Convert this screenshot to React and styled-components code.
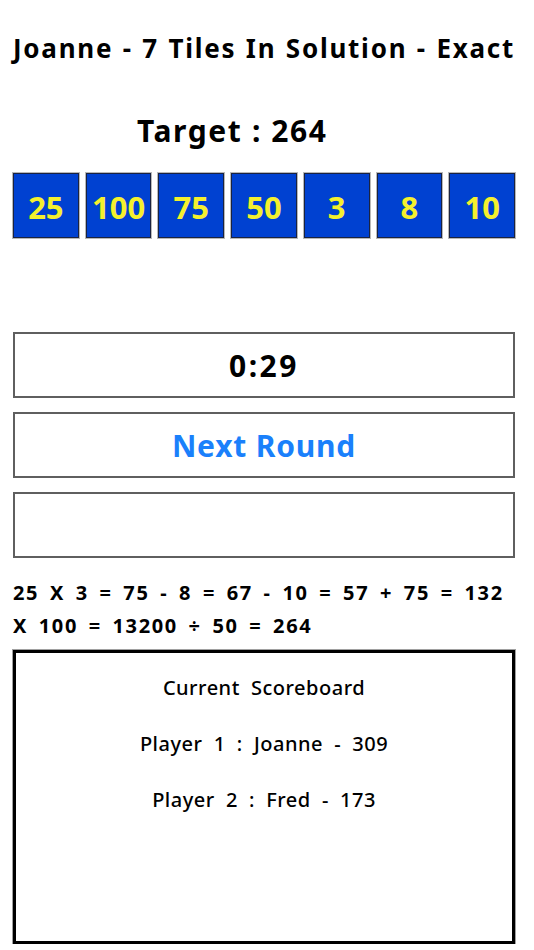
import React from 'react';
import styled, { createGlobalStyle } from 'styled-components';

const GlobalStyle = createGlobalStyle`
  html, body {
    margin: 0;
    padding: 0;
    background: #fff;
  }
  body {
    font-family: "Noto Sans", "DejaVu Sans", sans-serif;
    color: #000;
  }
`;

const tiles = [25, 100, 75, 50, 3, 8, 10];

const App = () => {
    return (
        <Page>
            <GlobalStyle />
            <Title>Joanne - 7 Tiles In Solution - Exact</Title>
            <Target>Target : 264</Target>
            <TileRow>
                {tiles.map((t, i) => (
                    <Tile key={i}>{t}</Tile>
                ))}
            </TileRow>
            <BoxStack>
                <Box $big>0:29</Box>
                <Box as="button" $link>Next Round</Box>
                <Box />
            </BoxStack>
            <Solution>
                25 X 3 = 75 - 8 = 67 - 10 = 57 + 75 = 132<br />
                X 100 = 13200 ÷ 50 = 264
            </Solution>
            <Scoreboard>
                <ScoreLine>Current Scoreboard</ScoreLine>
                <ScoreLine>Player 1 : Joanne - 309</ScoreLine>
                <ScoreLine>Player 2 : Fred - 173</ScoreLine>
            </Scoreboard>
        </Page>
    );
};

export default App;

const Page = styled.div`
    width: 502px;
    margin-left: 13px;
    padding-top: 31px;
    display: flex;
    flex-direction: column;
`
const Title = styled.div`
    font-size: 26px;
    font-weight: 700;
    letter-spacing: 1.75px;
    word-spacing: 1px;
    line-height: 34px;
    white-space: nowrap;
    text-align: center;
`
const Target = styled.div`
    margin-top: 47px;
    margin-left: 124px;
    font-size: 30px;
    font-weight: 700;
    letter-spacing: 1.6px;
    line-height: 38px;
`
const TileRow = styled.div`
    margin-top: 23px;
    display: flex;
    gap: 7px;
`
const Tile = styled.div`
    flex: 1;
    height: 65px;
    box-sizing: border-box;
    background: #0041d1;
    border: 1px solid #1a2340;
    box-shadow: 0 0 0 1px #b8b8b8;
    color: #f4f02e;
    font-size: 31px;
    font-weight: 700;
    display: flex;
    align-items: center;
    justify-content: center;
    padding-top: 2px;
`
const BoxStack = styled.div`
    margin-top: 94px;
    display: flex;
    flex-direction: column;
    gap: 14px;
`
const Box = styled.div`
    height: 66px;
    box-sizing: border-box;
    border: 2px solid #5f5f5f;
    background: #fff;
    display: flex;
    align-items: center;
    justify-content: center;
    font-family: inherit;
    font-size: 30px;
    font-weight: 700;
    letter-spacing: ${p => (p.$big ? '2.5px' : '0.8px')};
    color: ${p => (p.$link ? '#1a80fb' : '#000')};
    padding: 0;
    width: 100%;
`
const Solution = styled.div`
    margin-top: 18px;
    font-size: 20px;
    font-weight: 700;
    letter-spacing: 1.6px;
    word-spacing: 4px;
    line-height: 33px;
    white-space: nowrap;
`
const Scoreboard = styled.div`
    margin-top: 8px;
    height: 294px;
    box-sizing: border-box;
    border: 3px solid #000;
    box-shadow: 0 0 0 1px #a0a0a0;
    padding-top: 18px;
    display: flex;
    flex-direction: column;
    align-items: center;
    gap: 22px;
`
const ScoreLine = styled.div`
    font-size: 20px;
    font-weight: 500;
    line-height: 34px;
    letter-spacing: 0.5px;
    word-spacing: 5.5px;
`
